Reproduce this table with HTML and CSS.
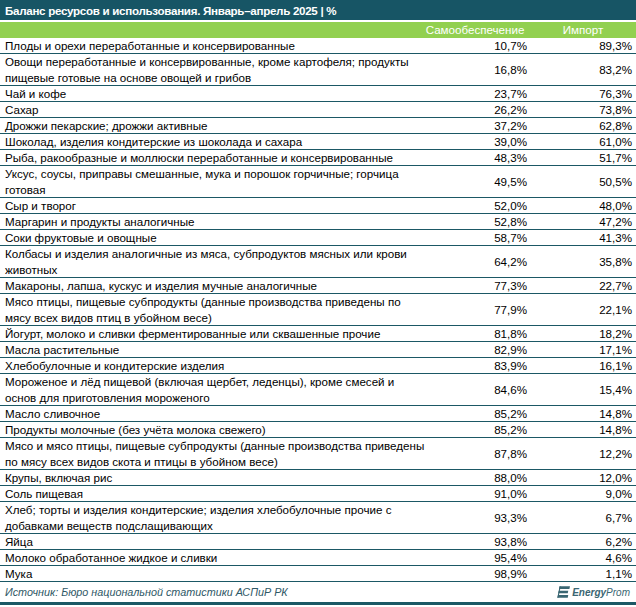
FILE: index.html
```html
<!DOCTYPE html>
<html lang="ru">
<head>
<meta charset="utf-8">
<title>Баланс ресурсов и использования</title>
<link rel="stylesheet" href="styles.css">
</head>
<body>
<div class="report">
  <div class="title">Баланс ресурсов и использования. Январь–апрель 2025 | %</div>
  <div class="head"><span></span><span>Самообеспечение</span><span>Импорт</span></div>
  <div class="rows">
    <div class="row"><div class="name">Плоды и орехи переработанные и консервированные</div><div class="v">10,7%</div><div class="v">89,3%</div></div>
    <div class="row"><div class="name">Овощи переработанные и консервированные, кроме картофеля; продукты<br>пищевые готовые на основе овощей и грибов</div><div class="v">16,8%</div><div class="v">83,2%</div></div>
    <div class="row"><div class="name">Чай и кофе</div><div class="v">23,7%</div><div class="v">76,3%</div></div>
    <div class="row"><div class="name">Сахар</div><div class="v">26,2%</div><div class="v">73,8%</div></div>
    <div class="row"><div class="name">Дрожжи пекарские; дрожжи активные</div><div class="v">37,2%</div><div class="v">62,8%</div></div>
    <div class="row"><div class="name">Шоколад, изделия кондитерские из шоколада и сахара</div><div class="v">39,0%</div><div class="v">61,0%</div></div>
    <div class="row"><div class="name">Рыба, ракообразные и моллюски переработанные и консервированные</div><div class="v">48,3%</div><div class="v">51,7%</div></div>
    <div class="row"><div class="name">Уксус, соусы, приправы смешанные, мука и порошок горчичные; горчица<br>готовая</div><div class="v">49,5%</div><div class="v">50,5%</div></div>
    <div class="row"><div class="name">Сыр и творог</div><div class="v">52,0%</div><div class="v">48,0%</div></div>
    <div class="row"><div class="name">Маргарин и продукты аналогичные</div><div class="v">52,8%</div><div class="v">47,2%</div></div>
    <div class="row"><div class="name">Соки фруктовые и овощные</div><div class="v">58,7%</div><div class="v">41,3%</div></div>
    <div class="row"><div class="name">Колбасы и изделия аналогичные из мяса, субпродуктов мясных или крови<br>животных</div><div class="v">64,2%</div><div class="v">35,8%</div></div>
    <div class="row"><div class="name">Макароны, лапша, кускус и изделия мучные аналогичные</div><div class="v">77,3%</div><div class="v">22,7%</div></div>
    <div class="row"><div class="name">Мясо птицы, пищевые субпродукты (данные производства приведены по<br>мясу всех видов птиц в убойном весе)</div><div class="v">77,9%</div><div class="v">22,1%</div></div>
    <div class="row"><div class="name">Йогурт, молоко и сливки ферментированные или сквашенные прочие</div><div class="v">81,8%</div><div class="v">18,2%</div></div>
    <div class="row"><div class="name">Масла растительные</div><div class="v">82,9%</div><div class="v">17,1%</div></div>
    <div class="row"><div class="name">Хлебобулочные и кондитерские изделия</div><div class="v">83,9%</div><div class="v">16,1%</div></div>
    <div class="row"><div class="name">Мороженое и лёд пищевой (включая щербет, леденцы), кроме смесей и<br>основ для приготовления мороженого</div><div class="v">84,6%</div><div class="v">15,4%</div></div>
    <div class="row"><div class="name">Масло сливочное</div><div class="v">85,2%</div><div class="v">14,8%</div></div>
    <div class="row"><div class="name">Продукты молочные (без учёта молока свежего)</div><div class="v">85,2%</div><div class="v">14,8%</div></div>
    <div class="row"><div class="name">Мясо и мясо птицы, пищевые субпродукты (данные производства приведены<br>по мясу всех видов скота и птицы в убойном весе)</div><div class="v">87,8%</div><div class="v">12,2%</div></div>
    <div class="row"><div class="name">Крупы, включая рис</div><div class="v">88,0%</div><div class="v">12,0%</div></div>
    <div class="row"><div class="name">Соль пищевая</div><div class="v">91,0%</div><div class="v">9,0%</div></div>
    <div class="row"><div class="name">Хлеб; торты и изделия кондитерские; изделия хлебобулочные прочие с<br>добавками веществ подслащивающих</div><div class="v">93,3%</div><div class="v">6,7%</div></div>
    <div class="row"><div class="name">Яйца</div><div class="v">93,8%</div><div class="v">6,2%</div></div>
    <div class="row"><div class="name">Молоко обработанное жидкое и сливки</div><div class="v">95,4%</div><div class="v">4,6%</div></div>
    <div class="row"><div class="name">Мука</div><div class="v">98,9%</div><div class="v">1,1%</div></div>
  </div>
  <div class="foot">
    <span class="src">Источник: Бюро национальной статистики АСПиР РК</span>
    <span class="logo">
      <svg class="logo-icon" width="13" height="12" viewBox="0 0 15 13" aria-hidden="true">
        <path d="M3 0H15L14.3 3H2.3Z" />
        <path d="M2 5H13L12.4 8H1.4Z" />
        <path d="M1.1 10H13L12.4 13H0.4Z" />
        <path d="M3 0H4.3L1.7 13H0.4Z" />
      </svg>
      <span class="logo-text"><b>Energy</b>Prom</span>
    </span>
  </div>
</div>
</body>
</html>
```
FILE: styles.css
```css
html, body {
  margin: 0;
  padding: 0;
  background: #ffffff;
}

body {
  font-family: "Liberation Sans", Arial, sans-serif;
  font-size: 11.6px;
  color: #000000;
}

.report {
  width: 636px;
}

.title {
  height: 20px;
  line-height: 21px;
  padding-left: 5px;
  background: #175565;
  color: #ffffff;
  font-weight: bold;
  font-size: 11.6px;
  letter-spacing: -0.3px;
  margin-bottom: 2px;
}

.head,
.row {
  display: grid;
  grid-template-columns: 420px 110px 106px;
}

.head {
  height: 16px;
  line-height: 15px;
  background: #92d050;
  color: #ffffff;
  text-align: center;
}

.row {
  line-height: 16px;
  align-items: center;
  box-shadow: inset 0 -1px 0 #1b5865;
}

.name {
  padding-left: 5px;
  white-space: nowrap;
}

.v {
  text-align: right;
}

.row .v:nth-child(2) {
  padding-right: 3px;
}

.row .v:nth-child(3) {
  padding-right: 4px;
}

.foot {
  height: 20px;
  display: flex;
  align-items: center;
  justify-content: space-between;
  border-bottom: 3px solid #1b5865;
}

.src {
  padding-left: 5px;
  font-style: italic;
  font-size: 10.8px;
  color: #2f5866;
}

.logo {
  display: flex;
  align-items: center;
  gap: 2px;
  padding-right: 6px;
  color: #3a6672;
}

.logo-icon {
  fill: #3a6672;
}

.logo-text {
  font-style: italic;
  font-size: 10px;
}

.logo-text b {
  font-weight: bold;
}
```
